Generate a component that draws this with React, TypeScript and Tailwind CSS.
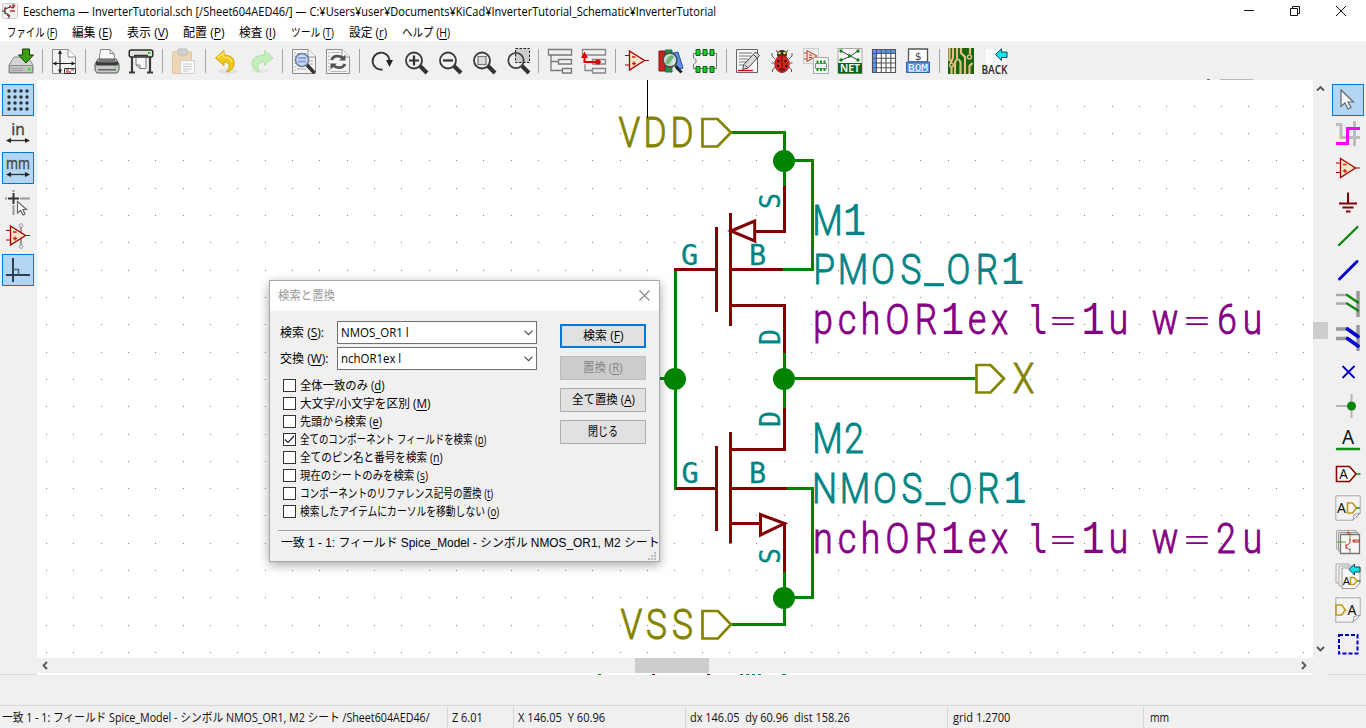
import React, { useLayoutEffect, useRef } from "react";

const UI_FONT = "font-['Open_Sans','Noto_Sans_CJK_JP',sans-serif]";

/** Single line of text condensed or widened to occupy a given width. */
function Fit({ w, children, className = "" }: { w: number; children: React.ReactNode; className?: string }) {
  const outer = useRef<HTMLSpanElement>(null);
  const inner = useRef<HTMLSpanElement>(null);
  useLayoutEffect(() => {
    if (!inner.current || !outer.current) return;
    outer.current.style.width = `${w}px`;
    inner.current.style.transform = `scaleX(${w / inner.current.offsetWidth})`;
  }, [w]);
  return (
    <span ref={outer} className={`inline-block shrink-0 whitespace-pre ${className}`}>
      <span ref={inner} className="inline-block origin-left whitespace-pre">{children}</span>
    </span>
  );
}

/** Text followed by its underlined access key in parentheses. */
function Mn({ t, k, end = "" }: { t: string; k: string; end?: string }) {
  return (
    <>
      {t} (<span className="underline underline-offset-2">{k}</span>){end}
    </>
  );
}

function Ico({ children }: { children: React.ReactNode }) {
  return (
    <svg width="26" height="26" viewBox="0 0 26 26" fill="none" className="block shrink-0 overflow-visible">
      {children}
    </svg>
  );
}

const Page = () => (
  <>
    <path d="M1.5 1.5H17L24.5 9V25.5H1.5Z" fill="#f4f4f4" stroke="#8c8c8c" />
    <path d="M17 1.5V9H24.5" fill="#fff" stroke="#8c8c8c" />
  </>
);

const Lens = () => (
  <>
    <path d="M18 18L25 25" stroke="#333" strokeWidth="4" />
    <circle cx="12" cy="12.5" r="8" stroke="#383838" strokeWidth="1.8" />
  </>
);

const OpAmp = () => (
  <>
    <path d="M1 7.5H6M1 17H6M19 12.5H25" stroke="#a40000" strokeWidth="1.2" />
    <path d="M5.5 3L20.5 12.5L5.5 22Z" fill="#f7e6c8" stroke="#a40000" strokeWidth="1.3" />
    <path d="M8 9H11.5M8 15.5H12M10 13.5V17.5" stroke="#c22" strokeWidth="1.3" />
  </>
);

const HierTree = () => (
  <path d="M1.5 1.5H24.5V7H1.5ZM11.5 11.5H24.5V16H11.5ZM15.5 20.5H24.5V25H15.5ZM4 7V22.5H15M4 13.5H11" fill="none" stroke="#777" strokeWidth="1.3" />
);

const I = {
  save: (
    <Ico>
      <path d="M6 9H20L25 17V25H1V17Z" fill="#d4d4d4" stroke="#888" />
      <path d="M1.5 17.5H24.5V24.5H1.5Z" fill="#c2c2c2" stroke="#8a8a8a" />
      <path d="M3 20.5H15M3 22.5H15" stroke="#999" strokeWidth=".8" />
      <rect x="20" y="20" width="2.5" height="2.5" fill="#1fe01f" />
      <path d="M14.5 1H21.5V7H25.5L18 15L10.5 7H14.5Z" fill="#3aa010" stroke="#163a04" />
    </Ico>
  ),
  page: (
    <Ico>
      <Page />
      <path d="M9 3V25M2 15.5H24" stroke="#222" strokeWidth="1.2" />
      <path d="M9 2L11 6H7ZM9 25.5L11 21.5H7ZM1.5 15.5L5.5 13.5V17.5ZM24.5 15.5L20.5 13.5V17.5Z" fill="#222" />
      <path d="M13.5 20.5H24.5V25.5H13.5Z" fill="#fff" stroke="#333" />
      <path d="M15 22H18M20 22H23M15 24H20" stroke="#a00" />
    </Ico>
  ),
  print: (
    <Ico>
      <path d="M5 13L6.5 1.5H16L20 5.5L21 13Z" fill="#fafafa" stroke="#888" />
      <path d="M16 1.5V5.5H20" stroke="#888" />
      <path d="M4 11H22L25 16V22L23 25H3L1 22V16Z" fill="#c9c9c9" stroke="#555" />
      <rect x="2" y="13.5" width="22" height="4" rx="1" fill="#3a3a3a" />
      <rect x="5" y="11" width="16" height="3.5" fill="#777" />
      <rect x="4" y="21" width="18" height="1.5" fill="#666" />
      <rect x="20" y="18.5" width="2" height="1.5" fill="#6e6" />
    </Ico>
  ),
  plot: (
    <Ico>
      <path d="M4 9V24M22 9V24M1 24.5H7M19 24.5H25" stroke="#3c3c40" strokeWidth="2.2" />
      <path d="M8 8H18V20.5H12L8 17Z" fill="#f6f6f6" stroke="#777" />
      <path d="M8 17H12V20.5" stroke="#777" />
      <rect x="1.2" y="2" width="23.6" height="7" rx="2" fill="#e2e4dc" stroke="#2b2b2b" strokeWidth="1.5" />
      <path d="M6 7.5H20" stroke="#333" strokeWidth="1.5" />
      <rect x="20" y="4" width="2.5" height="2" fill="#2c2" />
    </Ico>
  ),
  paste: (
    <Ico>
      <rect x="1.5" y="3.5" width="19" height="22" rx="1.5" fill="#eed6b4" stroke="#dfc7a6" />
      <rect x="7" y="1" width="9" height="6" rx="1" fill="#d0d0d0" stroke="#bbb" />
      <path d="M9.5 12.5H23.5V25.5H9.5Z" fill="#f8f8f8" stroke="#cfcfcf" />
      <path d="M12 16H21M12 18.5H21M12 21H21M12 23H17" stroke="#cacaca" />
    </Ico>
  ),
  undo: (
    <Ico>
      <ellipse cx="14" cy="23" rx="10" ry="2.5" fill="#e0e0e0" />
      <path d="M1.5 10L10 2.5V7C17.500 7 20.500 11 20 16C19.500 20.500 16.500 23.500 12.500 24C16 20.500 17 14.500 10 13.500V17.500Z" fill="#f2c81c" stroke="#d5a503" strokeLinejoin="round" />
      <path d="M3.5 10L9 5V9C14 9 17 10.500 18 14" stroke="#f9e779" strokeWidth="1.2" />
    </Ico>
  ),
  redo: (
    <Ico>
      <ellipse cx="12" cy="23" rx="9" ry="2" fill="#e8e8e8" />
      <path d="M25 10L16.500 2.500V7C8.500 7 3.500 11 4 16C4.500 20.500 8 23.500 12 24C8.500 20.500 8 14.500 16.500 13.500V17.500Z" fill="#c4efbc" stroke="#ace2a2" strokeLinejoin="round" />
    </Ico>
  ),
  find: (
    <Ico>
      <Page />
      <path d="M4 4V24" stroke="#999" strokeDasharray="1.5 2" />
      <path d="M6 5.500H15M6 21H15M17 13H22M18 16H22" stroke="#aaa" />
      <circle cx="11" cy="12" r="6.500" fill="#c6d8f2" stroke="#70809a" strokeWidth="1.600" />
      <path d="M7 10H15M7 13.500H15" stroke="#86a6da" strokeWidth="1.800" />
      <path d="M16 17L23.500 25" stroke="#333" strokeWidth="3.500" />
    </Ico>
  ),
  replace: (
    <Ico>
      <Page />
      <path d="M4 4V24" stroke="#999" strokeDasharray="1.5 2" />
      <path d="M6 4.500H15M6 23.500H22" stroke="#bbb" />
      <path d="M6.500 12C8 7.500 14 7 18 10M20 16C18 20.500 12 20.500 8 17.500" stroke="#555" strokeWidth="2.800" />
      <path d="M20.500 6.500V12.500H14ZM5.500 21.500V15.500H12Z" fill="#555" />
    </Ico>
  ),
  refresh: (
    <Ico>
      <path d="M14.500 21.500A8.500 8.500 0 1 1 21.500 12" stroke="#333" strokeWidth="1.900" />
      <path d="M18 12H25L21.500 19Z" fill="#222" />
    </Ico>
  ),
  zin: (
    <Ico>
      <Lens />
      <path d="M12 7.500V17.500M7 12.500H17" stroke="#333" strokeWidth="2.200" />
    </Ico>
  ),
  zout: (
    <Ico>
      <Lens />
      <path d="M7 12.500H17" stroke="#333" strokeWidth="2.200" />
    </Ico>
  ),
  zfit: (
    <Ico>
      <Lens />
      <rect x="8" y="8.500" width="8" height="8" fill="#ddd" stroke="#777" strokeWidth="1.200" />
    </Ico>
  ),
  zsel: (
    <Ico>
      <rect x="11.500" y="0.500" width="14" height="14" fill="#ccc" stroke="#222" strokeDasharray="2.500 1.500" />
      <path d="M18 18L25 25" stroke="#333" strokeWidth="4" />
      <circle cx="12" cy="12.500" r="7.700" stroke="#444" strokeWidth="1.800" />
    </Ico>
  ),
  tree: <Ico><HierTree /></Ico>,
  up: (
    <Ico>
      <path d="M1.500 1.500H24.500V7H1.500ZM11.500 11.500H24.500V16H11.500ZM11.500 20.500H24.500V25H11.500ZM4 16V22.500H11" fill="none" stroke="#888" strokeWidth="1.300" />
      <path d="M3.500 8V14H16" stroke="#e00000" strokeWidth="2" />
      <path d="M3.500 3.500L7 10H0ZM15.500 11.500h3l1.500 2.500-1.500 2.500h-3L13.500 14Z" fill="#e00000" />
    </Ico>
  ),
  opamp: <Ico><OpAmp /></Ico>,
  library: (
    <Ico>
      <path d="M1 3H7V23H1Z" fill="#c5271b" stroke="#811" />
      <path d="M7.500 2H14V24H7.500Z" fill="#2e8b3a" stroke="#175" />
      <path d="M15 5L20 4L25 20L19 22Z" fill="#5b93e8" stroke="#2554a0" />
      <circle cx="12" cy="12" r="7" fill="#dcebe4" fillOpacity=".85" stroke="#444" strokeWidth="1.500" />
      <path d="M7 16L10 9L14 7L16 9L11 16Z" fill="#72b67c" />
      <path d="M17.500 18L23.500 24.500" stroke="#222" strokeWidth="3" />
    </Ico>
  ),
  footprint: (
    <Ico>
      <path d="M4 5.500H1.500V10C5 10.500 5 15.500 1.500 16V20.500H24.500V5.500Z" stroke="#777" fill="#f3f3f3" />
      <path d="M4 1.500h4v6H4zM11 1.500h4v6h-4zM18 1.500h4v6h-4zM4 18.500h4v6H4zM11 18.500h4v6h-4zM18 18.500h4v6h-4z" fill="#15cf28" stroke="#175c1b" />
    </Ico>
  ),
  annotate: (
    <Ico>
      <path d="M1.500 1.500H22.500V24.500H1.500Z" fill="#f8f8f8" stroke="#666" />
      <path d="M4 5H17M4 8H16M4 11H13M4 14H12M4 17H9" stroke="#777" />
      <path d="M3 22.500H18" stroke="#e00" strokeWidth="1.400" />
      <path d="M20.500 4L24.500 7.500L13 20L7.500 21.500L9 16.500Z" fill="#ddd" stroke="#444" />
      <path d="M10 17L12.500 19.500M18.500 6.500L22 10" stroke="#444" />
    </Ico>
  ),
  erc: (
    <Ico>
      <path d="M9 5L7 2M17 5L19 2M6 11L3 8V5M20 11L23 8V5M5 15H2.500M21 15H23.500M6 19L3.500 22V24M20 19L22.500 22V24" stroke="#555" strokeWidth="1" />
      <ellipse cx="13" cy="6.500" rx="5" ry="4.500" fill="#33332e" />
      <circle cx="10.500" cy="5" r="1.300" fill="#f6e04a" />
      <circle cx="15.500" cy="5" r="1.300" fill="#f6e04a" />
      <ellipse cx="13" cy="16" rx="7.300" ry="8.500" fill="#d8261f" stroke="#8a1512" strokeWidth=".800" />
      <path d="M13 8V24.500" stroke="#5a0b0b" />
      <g fill="#2a0808"><circle cx="9.500" cy="13" r="1.200" /><circle cx="16.500" cy="13" r="1.200" /><circle cx="9" cy="18" r="1.200" /><circle cx="17" cy="18" r="1.200" /><circle cx="11" cy="21.500" r="1" /><circle cx="15" cy="21.500" r="1" /></g>
    </Ico>
  ),
  assign: (
    <Ico>
      <rect x=".500" y=".500" width="15" height="15" fill="#eee" stroke="#ccc" />
      <path d="M1 5H4M1 11H4M4 2.500L14 8L4 13.500Z" fill="#f3dccb" stroke="#b53b30" />
      <path d="M6 7h3M6 9.500h3" stroke="#b33" />
      <rect x="10.500" y="9.500" width="15" height="16" fill="#f7f7f7" stroke="#aaa" />
      <path d="M12.500 15.500H23.500V20.500H12.500Z" stroke="#888" />
      <path d="M13.500 12.500h2v3h-2zM17 12.500h2v3h-2zM20.500 12.500h2v3h-2zM13.500 20h2v3h-2zM17 20h2v3h-2zM20.500 20h2v3h-2z" fill="#109b20" />
    </Ico>
  ),
  net: (
    <Ico>
      <rect x="1" y=".500" width="24" height="25" fill="#f7f7f7" stroke="#aaa" />
      <path d="M4 3L21 12M21 3L12 9L4 12" stroke="#444" />
      <g fill="#16801f"><circle cx="4" cy="3" r="1.700" /><circle cx="21" cy="3" r="1.700" /><circle cx="12.500" cy="8" r="1.700" /><circle cx="4" cy="12" r="1.700" /><circle cx="21" cy="12" r="1.700" /></g>
      <rect x="1" y="15" width="24" height="10.500" fill="#146314" />
      <text x="13" y="24.200" fontSize="11" fontWeight="600" fill="#fff" textAnchor="middle" textLength="20" lengthAdjust="spacingAndGlyphs" fontFamily="Noto Sans">NET</text>
    </Ico>
  ),
  table: (
    <Ico>
      <rect x="1.500" y="1.500" width="23" height="23" fill="#fff" />
      <path d="M1 1H25V5.500H5.500V25H1Z" fill="#5b99f0" />
      <path d="M1.500 1.500H24.500V24.500H1.500ZM5.500 1.500V24.500M10.300 1.500V24.500M15 1.500V24.500M19.800 1.500V24.500M1.500 5.500H24.500M1.500 10.300H24.500M1.500 15H24.500M1.500 19.800H24.500" stroke="#555" strokeWidth="1.100" />
    </Ico>
  ),
  bom: (
    <Ico>
      <path d="M3.500 1H22.500V14H3.500Z" fill="#fff" stroke="#555" strokeWidth="1.300" />
      <text x="13" y="12" fontSize="11" fill="#444" textAnchor="middle" fontFamily="DejaVu Sans Mono">$</text>
      <path d="M1.500 14H24.500V24.500H1.500Z" fill="#5590e9" stroke="#34659f" />
      <text x="13" y="22.500" fontSize="9.500" fill="#fff" textAnchor="middle" textLength="20" lengthAdjust="spacingAndGlyphs" fontFamily="DejaVu Sans Mono">BOM</text>
      <path d="M4 23.500H22" stroke="#eaf2ff" strokeWidth=".700" />
    </Ico>
  ),
  pcb: (
    <Ico>
      <rect x="0" y="0" width="26" height="26" fill="#16640f" />
      <path d="M1.500 0V13M5 0V10L3 14V16M9 0V11L7 14V26M13 0V5L17 9V26M22 0V6M12.500 26V14L10.500 11M21.500 26V18L24.500 15M3.500 19V26" stroke="#e0bf80" strokeWidth="2.200" />
      <circle cx="3.500" cy="17" r="1.800" stroke="#e0bf80" strokeWidth="1.500" />
      <circle cx="21.500" cy="9" r="2" stroke="#e0bf80" strokeWidth="1.500" />
    </Ico>
  ),
  back: (
    <Ico>
      <path d="M4 1H24V25H4Z" fill="#fbfbfb" />
      <path d="M13.500 6.500L19.500 .800V4H25V9.500H19.500V12.500Z" fill="#12e3ea" stroke="#145" strokeLinejoin="round" />
      <text x="12.500" y="25.500" fontSize="12" fontWeight="600" fill="#333" textAnchor="middle" textLength="26" lengthAdjust="spacingAndGlyphs" fontFamily="Noto Sans">BACK</text>
    </Ico>
  ),
};

const tools: React.ReactNode[] = [
  I.save, null, I.page, null, I.print, I.plot, null, I.paste, null, I.undo, I.redo, null, I.find, I.replace, null,
  I.refresh, I.zin, I.zout, I.zfit, I.zsel, null, I.tree, I.up, null, I.opamp, I.library, I.footprint, null,
  I.annotate, I.erc, I.assign, I.net, I.table, I.bom, null, I.pcb, I.back,
];

const DimArrow = () => (
  <>
    <path d="M4 19.500H22" stroke="#333" strokeWidth="1.300" />
    <path d="M1 19.500L6 17V22ZM25 19.500L20 17V22Z" fill="#222" />
  </>
);

const leftTools: { on?: boolean; icon: React.ReactNode }[] = [
  {
    on: true,
    icon: (
      <Ico>
        {[4, 10, 16, 22].flatMap((y) => [4, 10, 16, 22].map((x) => <circle key={`${x}-${y}`} cx={x} cy={y} r="1.700" fill="#2d3238" />))}
      </Ico>
    ),
  },
  {
    icon: (
      <Ico>
        <text x="13" y="14" fontSize="15.500" fill="#444" stroke="#444" strokeWidth=".300" textAnchor="middle" fontFamily="Noto Sans">in</text>
        <DimArrow />
      </Ico>
    ),
  },
  {
    on: true,
    icon: (
      <Ico>
        <text x="13" y="14" fontSize="16" fill="#444" stroke="#444" strokeWidth=".300" textAnchor="middle" textLength="24" lengthAdjust="spacingAndGlyphs" fontFamily="Noto Sans">mm</text>
        <DimArrow />
      </Ico>
    ),
  },
  {
    icon: (
      <Ico>
        <path d="M8.500 1V3M8.500 16V26M0 9.500H2M15 9.500H25" stroke="#999" strokeWidth="2" />
        <path d="M8.500 4V15M3 9.500H14" stroke="#333" strokeWidth="2" />
        <path d="M12.500 12.500V24L15.500 21.500L18 26L20 25L18 20.500H21.500Z" fill="#fff" stroke="#666" strokeWidth="1.200" />
      </Ico>
    ),
  },
  {
    icon: (
      <Ico>
        <path d="M16 3V24" stroke="#999" strokeWidth="2" />
        <circle cx="16" cy="2.500" r="1.800" fill="#eee" stroke="#999" />
        <circle cx="16" cy="23.500" r="1.800" fill="#eee" stroke="#999" />
        <OpAmp />
      </Ico>
    ),
  },
  {
    on: true,
    icon: (
      <Ico>
        <path d="M8 1V25M1 18H25" stroke="#2c3e50" strokeWidth="2" />
        <path d="M8 12.500H13.500V18" stroke="#50657a" strokeWidth="1.500" />
      </Ico>
    ),
  },
];

const Sheet = () => (
  <>
    <path d="M.800 .800H25.200V18L18 25.200H.800Z" fill="#f3f3f3" stroke="#aaa" />
    <path d="M25.200 18L19 19.500L18 25.200Z" fill="#fff" stroke="#999" />
  </>
);

const A = ({ x, y, s }: { x: number; y: number; s: number }) => (
  <text x={x} y={y} fontSize={s} fill="#111" textAnchor="middle" fontFamily="Noto Sans">A</text>
);

const rightTools: { on?: boolean; icon: React.ReactNode }[] = [
  { on: true, icon: <Ico><path d="M6 3V19.500L10 16L13 22L16 20.500L13 15H18.500Z" fill="#f4f4f4" stroke="#666" strokeWidth="1.200" /></Ico> },
  {
    icon: (
      <Ico>
        <path d="M1 3.500H6V16.500H25M19.500 0V25" stroke="#bcbcbc" strokeWidth="3" />
        <path d="M1 22.500H12.500V7.500H25" stroke="#f0f" strokeWidth="3" />
      </Ico>
    ),
  },
  { icon: <Ico><g transform="translate(0 .5)"><OpAmp /></g></Ico> },
  { icon: <Ico><path d="M13 3.500V14M4 14.500H22M7.500 18.500H18.500M11 22.500H15.500" stroke="#840000" strokeWidth="2" /></Ico> },
  { icon: <Ico><path d="M4 22L22.500 4" stroke="#0a850a" strokeWidth="2.300" strokeLinecap="round" /></Ico> },
  { icon: <Ico><path d="M4.500 22L22 4.500" stroke="#0000c8" strokeWidth="3" strokeLinecap="round" /></Ico> },
  {
    icon: (
      <Ico>
        <path d="M1 4H12M1 12.500H12" stroke="#aaa" strokeWidth="2.300" />
        <path d="M23 0V26" stroke="#999" strokeWidth="3.500" />
        <path d="M12 4L23 11.500M12 12.500L23 19.500" stroke="#0a850a" strokeWidth="2.300" strokeLinecap="round" />
      </Ico>
    ),
  },
  {
    icon: (
      <Ico>
        <path d="M1 4H12M1 13.500H12" stroke="#999" strokeWidth="3.500" />
        <path d="M23 0V26" stroke="#999" strokeWidth="3.500" />
        <path d="M12.500 4L23 11.500M12.500 13.500L23 21" stroke="#0000d0" strokeWidth="3.700" strokeLinecap="round" />
      </Ico>
    ),
  },
  { icon: <Ico><path d="M7.500 7L19.500 19M19.500 7L7.500 19" stroke="#0000c8" strokeWidth="1.800" /></Ico> },
  {
    icon: (
      <Ico>
        <path d="M1 13H13M16.500 1V25" stroke="#b5b5b5" strokeWidth="2" />
        <circle cx="16.500" cy="13" r="4.500" fill="#0a850a" />
      </Ico>
    ),
  },
  { icon: <Ico><A x={13} y={17} s={19} /><path d="M2 22H24" stroke="#0a9010" strokeWidth="2.500" strokeLinecap="round" /></Ico> },
  {
    icon: (
      <Ico>
        <path d="M1.500 5.500H14.500L21 13L14.500 20.500H1.500Z" fill="#fff" stroke="#840000" strokeWidth="1.600" />
        <path d="M21 13H25.500" stroke="#1a9a1a" strokeWidth="1.600" />
        <A x={8.500} y={18} s={13.500} />
      </Ico>
    ),
  },
  {
    icon: (
      <Ico>
        <Sheet />
        <A x={6.500} y={18} s={14} />
        <path d="M12.500 8H17.500L21.500 13L17.500 18H12.500Z" stroke="#c49a15" strokeWidth="1.600" />
        <path d="M21 13H25" stroke="#1a9a1a" strokeWidth="1.500" />
      </Ico>
    ),
  },
  {
    icon: (
      <Ico>
        <path d="M1.500 1.500H21V20H1.500Z" fill="#ececec" stroke="#aaa" />
        <path d="M3.500 3.500H23V22H3.500Z" fill="#eee" stroke="#999" />
        <path d="M5.500 5.500H24.500V24.500H5.500Z" fill="#f7f7f7" stroke="#777" strokeWidth="1.300" />
        <path d="M2 13H11M15 5V12M15 19V24M18 12H21" stroke="#55a545" strokeWidth="1" />
        <path d="M13 2V5H16M11 15V20M11 17L15 14V10M11 18L15 21M18 11H24V13H18Z" stroke="#cc2f25" strokeWidth="1" />
      </Ico>
    ),
  },
  {
    icon: (
      <Ico>
        <path d="M1 1H14V20H1Z" fill="#f1f1f1" stroke="#aaa" />
        <path d="M4 3H17V23H4Z" fill="#f5f5f5" stroke="#aaa" />
        <path d="M7 5H25V20L20 25.500H7Z" fill="#f8f8f8" stroke="#999" />
        <A x={11.500} y={22} s={11.500} />
        <path d="M15.500 14.500H19L22 18L19 21.500H15.500Z" stroke="#c49a15" strokeWidth="1.400" />
        <path d="M22 18H25.500" stroke="#1a9a1a" strokeWidth="1.400" />
        <path d="M14 6.500L19.500 1V4H25V9H19.500V12Z" fill="#12e3ea" stroke="#145" />
      </Ico>
    ),
  },
  {
    icon: (
      <Ico>
        <Sheet />
        <path d="M1 8H6.500L10.500 13L6.500 18H1Z" stroke="#c49a15" strokeWidth="1.600" />
        <A x={17} y={18} s={14} />
      </Ico>
    ),
  },
  { icon: <Ico><rect x="4" y="4" width="18.500" height="18.500" stroke="#0000c0" strokeWidth="2" strokeDasharray="4 2" /></Ico> },
];

function ToolColumn({ items }: { items: { on?: boolean; icon: React.ReactNode }[] }) {
  return (
    <div className="flex flex-col items-center gap-0.5 pt-1">
      {items.map((t, i) => (
        <button
          key={i}
          className={
            t.on
              ? "flex size-8 shrink-0 items-center justify-center border border-[#0078d7] bg-[#b3d6f5]"
              : "flex size-8 shrink-0 items-center justify-center border border-transparent"
          }
        >
          {t.icon}
        </button>
      ))}
    </div>
  );
}

const TEAL = "#008484";
const OLIVE = "#848400";
const PURPLE = "#840084";
const GREEN = "#008400";
const MAROON = "#840000";
const SX = 0.84;

/** Face, size and outline for the characters that need their own drafting shape. */
const glyphs: Record<string, { fontFamily: string; fontSize: number; strokeWidth: number }> = {
  "1": { fontFamily: "Liberation Mono", fontSize: 46, strokeWidth: 0 },
  l: { fontFamily: "DejaVu Sans Mono", fontSize: 39, strokeWidth: 0 },
  "=": { fontFamily: "DejaVu Sans", fontSize: 41, strokeWidth: 0 },
  _: { fontFamily: "Roboto", fontSize: 54, strokeWidth: 0.4 },
};

/** Schematic label whose characters are centred on the given x positions. */
function Label({ t, xs, y, c }: { t: string; xs: number[]; y: number; c: string }) {
  return (
    <text
      transform={`scale(${SX} 1)`}
      fontSize="42"
      fontWeight="300"
      fill={c}
      stroke={c}
      strokeWidth=".9"
      textAnchor="middle"
      fontFamily="Roboto"
      xmlSpace="preserve"
    >
      {[...t].map((ch, i) => (
        <tspan key={i} x={(xs[i] / SX).toFixed(2)} y={ch === "_" ? y - 1 : y} {...glyphs[ch]}>
          {ch}
        </tspan>
      ))}
    </text>
  );
}

function Pin({ t, x, y }: { t: string; x: number; y: number }) {
  return (
    <text x={x} y={y} fontSize="28.500" fill={TEAL} stroke={TEAL} strokeWidth=".3" textAnchor="middle" fontFamily="DejaVu Sans Mono">
      {t}
    </text>
  );
}

function Rot({ t, x, y }: { t: string; x: number; y: number }) {
  return (
    <text transform={`translate(${x} ${y}) rotate(-90) scale(.93 1)`} fontSize="28.500" fill={TEAL} stroke={TEAL} strokeWidth=".3" textAnchor="middle" fontFamily="DejaVu Sans Mono">
      {t}
    </text>
  );
}

function Schematic() {
  const dots: React.ReactNode[] = [];
  for (let j = 0; j < 21; j++)
    for (let i = 0; i < 47; i++)
      dots.push(<rect key={`${i}-${j}`} x={Math.floor(46.4 + i * 27.33)} y={Math.floor(106.3 + j * 27.31)} width="1" height="1" fill="#848484" />);
  return (
    <svg width="1276" height="578" viewBox="37 80 1276 578" className="block" fill="none">
      <g shapeRendering="crispEdges">{dots}</g>
      <g stroke={GREEN} strokeWidth="3">
        <path d="M731 132.500H784.500V186M784 160.500H812.500V269.500H783M675.500 268V490M640 378.500H675M784.500 353V408M784 378.500H976M787 488.500H812.500V597.500H784M784.500 572V624.500H731" />
      </g>
      <g stroke={MAROON} strokeWidth="3">
        <path d="M784.500 186V231.500H755M731 231L754.700 221V241ZM730.500 213V326M716.500 227V312M674 269.500H716M730 269.500H783M730 305.500H784.500V353" />
        <path d="M784.500 408V449.500H730M730.500 432V543.500M716.500 446V531M676 488.500H716M730 488.500H787M730 523.500H760M760.500 514.500V535L784.500 523.500ZM784.500 523V572" />
      </g>
      <g fill={GREEN}>
        <circle cx="784" cy="161" r="11" />
        <circle cx="675" cy="379" r="11" />
        <circle cx="784" cy="379" r="11" />
        <circle cx="784" cy="598" r="11" />
      </g>
      <g stroke={OLIVE} strokeWidth="2.700">
        <path d="M702.500 119H717.500L731 132.500L717.500 146.500H702.500Z" />
        <path d="M976.500 365H990.500L1004 378.500L990.500 392.500H976.500Z" />
        <path d="M702.500 611H718L731 624.500L718 638.500H702.500Z" />
      </g>
      <Label t="VDD" xs={[629.500, 655, 682]} y={147} c={OLIVE} />
      <Label t="VSS" xs={[631.500, 656.500, 682.500]} y={639} c={OLIVE} />
      <Label t="X" xs={[1023.500]} y={393} c={OLIVE} />
      <Label t="M1" xs={[827.500, 854.500]} y={235} c={TEAL} />
      <Label t="PMOS_OR1" xs={[824, 853, 883, 911, 934, 958.500, 987, 1012.500]} y={284} c={TEAL} />
      <Label t="pchOR1ex l=1u w=6u" xs={[823, 847, 870.500, 897.500, 926, 952.500, 977, 999.500, 1018, 1038.500, 1063, 1093, 1118.500, 1140, 1165, 1197, 1227, 1252.500]} y={334} c={PURPLE} />
      <Label t="M2" xs={[827.500, 854]} y={453} c={TEAL} />
      <Label t="NMOS_OR1" xs={[824.500, 855, 885, 912, 935.500, 960.500, 988.500, 1015]} y={503} c={TEAL} />
      <Label t="nchOR1ex l=1u w=2u" xs={[823, 847, 870.500, 897.500, 926, 952.500, 977, 999.500, 1018, 1038.500, 1063, 1093, 1118.500, 1140, 1165, 1197, 1226, 1252.500]} y={553} c={PURPLE} />
      <Pin t="G" x={689.500} y={264.500} />
      <Pin t="B" x={757.500} y={264.500} />
      <Pin t="G" x={690} y={483} />
      <Pin t="B" x={757.500} y={483} />
      <Rot t="S" x={779.500} y={201} />
      <Rot t="D" x={779.500} y={337} />
      <Rot t="D" x={779.500} y={419} />
      <Rot t="S" x={779.500} y={556} />
      <path d="M647.500 80V118" stroke="#000" />
    </svg>
  );
}

const Chevron = ({ d }: { d: string }) => (
  <svg width="9" height="9" viewBox="0 0 9 9" fill="none" className="block shrink-0">
    <path d={d} stroke="#555" strokeWidth="1.800" />
  </svg>
);

function Combo({ text, w }: { text: string; w: number }) {
  return (
    <div className="flex h-[23px] w-[200px] items-center justify-between border border-[#707070] bg-white pr-[3px] pl-[3px]">
      <Fit w={w} className="leading-[18px]">{text}</Fit>
      <svg width="9" height="6" viewBox="0 0 9 6" fill="none">
        <path d="M.500 .700L4.500 4.700L8.500 .700" stroke="#444" strokeWidth="1.100" />
      </svg>
    </div>
  );
}

const checks: [string, string, number, boolean?][] = [
  ["全体一致のみ", "d", 85],
  ["大文字/小文字を区別", "M", 130],
  ["先頭から検索", "e", 82],
  ["全てのコンポーネント フィールドを検索", "p", 186, true],
  ["全てのピン名と番号を検索", "n", 143],
  ["現在のシートのみを検索", "s", 128],
  ["コンポーネントのリファレンス記号の置換", "t", 193],
  ["検索したアイテムにカーソルを移動しない", "o", 199],
];

function Dialog() {
  return (
    <div className="absolute top-[280px] left-[269px] flex h-[282px] w-[391px] flex-col border border-[#a8a8a8] bg-[#f0f0f0] text-black shadow-[0_3px_10px_rgba(0,0,0,0.35)]">
      <div className="flex h-[30px] shrink-0 items-center justify-between bg-white pr-[9px] pl-2 text-[#999]">
        <Fit w={57}>検索と置換</Fit>
        <svg width="11" height="11" viewBox="0 0 11 11" fill="none" className="-mt-0.5">
          <path d="M.500 .500L10.500 10.500M10.500 .500L.500 10.500" stroke="#888" strokeWidth="1.100" />
        </svg>
      </div>
      <div className="flex h-[219px] shrink-0 pl-[10px]">
        <div className="flex w-[280px] flex-col pt-[10px]">
          <div className="mb-[3px] flex h-[23px] items-center">
            <div className="w-[57px]"><Fit w={44}><Mn t="検索" k="S" end=":" /></Fit></div>
            <Combo text="NMOS_OR1 l" w={68} />
          </div>
          <div className="flex h-[23px] items-center">
            <div className="w-[57px]"><Fit w={48}><Mn t="交換" k="W" end=":" /></Fit></div>
            <Combo text="nchOR1ex l" w={60} />
          </div>
          <div className="mt-1.5 flex flex-col pl-[3px]">
            {checks.map(([t, k, w, on]) => (
              <div key={k} className="flex h-[18px] items-center gap-1">
                <span className="flex size-[13px] shrink-0 items-center justify-center border border-[#333] bg-white">
                  {on && (
                    <svg width="11" height="11" viewBox="0 0 11 11" fill="none">
                      <path d="M1 5.500L4 8.500L10 2" stroke="#222" strokeWidth="1.200" />
                    </svg>
                  )}
                </span>
                <Fit w={w} className="mt-0.5 leading-[18px]"><Mn t={t} k={k} /></Fit>
              </div>
            ))}
          </div>
        </div>
        <div className="flex flex-col gap-2 pt-[13px]">
          <button className="flex h-6 w-[86px] items-center justify-center border-2 border-[#0078d7] bg-[#e1e1e1]"><Fit w={40}><Mn t="検索" k="F" /></Fit></button>
          <button className="flex h-6 w-[86px] items-center justify-center border border-[#bfbfbf] bg-[#ccc] text-[#858585]"><Fit w={40}><Mn t="置換" k="R" /></Fit></button>
          <button className="flex h-6 w-[86px] items-center justify-center border border-[#adadad] bg-[#e1e1e1]"><Fit w={63}><Mn t="全て置換" k="A" /></Fit></button>
          <button className="flex h-6 w-[86px] items-center justify-center border border-[#adadad] bg-[#e1e1e1]"><Fit w={30}>閉じる</Fit></button>
        </div>
      </div>
      <div className="mr-2 ml-2 h-0.5 border-t border-b border-t-[#a0a0a0] border-b-white" />
      <div className="flex h-5 items-center overflow-hidden pt-px pl-[11px]">
        <Fit w={379} className="font-['Liberation_Sans','Noto_Sans_CJK_JP',sans-serif]">一致 1 - 1: フィールド Spice_Model - シンボル NMOS_OR1, M2 シート</Fit>
      </div>
      <div className="mt-auto flex justify-end pr-[2px] pb-px">
        <svg width="9" height="8" viewBox="0 0 9 8" fill="#bbb">
          <path d="M6 0h2v2H6zM3 3h2v2H3zM6 3h2v2H6zM0 6h2v2H0zM3 6h2v2H3zM6 6h2v2H6z" />
        </svg>
      </div>
    </div>
  );
}

const menus: [string, string, number][] = [
  ["ファイル", "F", 50], ["編集", "E", 40], ["表示", "V", 41], ["配置", "P", 41],
  ["検査", "I", 37], ["ツール", "T", 43], ["設定", "r", 38], ["ヘルプ", "H", 48],
];

export default function App() {
  return (
    <div className={`relative flex h-[728px] w-[1366px] flex-col overflow-hidden bg-[#f0f0f0] text-[12px] leading-4 text-black ${UI_FONT}`}>
      <header className="flex h-[22px] shrink-0 items-center bg-white pl-[2px]">
        <svg width="16" height="16" viewBox="0 0 16 16" fill="none" className="mr-[5px]">
          <rect x=".500" y=".500" width="15" height="15" rx="1" fill="#f4f4f0" stroke="#ccc" />
          <path d="M3 5V11M3 8H0M3 6L8 4M3 10L7 12V15M11 1V5" stroke="#333" strokeWidth="1.200" />
          <path d="M8 2V4L11 5L13 2M8 8H13M3 4V7M5 12L8 13" stroke="#c1272d" strokeWidth="1.400" />
        </svg>
        <Fit w={693} className="pt-px">Eeschema — InverterTutorial.sch [/Sheet604AED46/] — C:¥Users¥user¥Documents¥KiCad¥InverterTutorial_Schematic¥InverterTutorial</Fit>
        <div className="ml-auto flex items-center gap-9 pr-5">
          <svg width="10" height="10" viewBox="0 0 10 10"><path d="M0 4.500H10" stroke="#111" /></svg>
          <svg width="10" height="10" viewBox="0 0 10 10" fill="none"><path d="M.500 2.500H7.500V9.500H.500ZM2.500 2.500V.500H9.500V7.500H7.500" stroke="#111" /></svg>
          <svg width="10" height="10" viewBox="0 0 10 10"><path d="M0 0L10 10M10 0L0 10" stroke="#111" /></svg>
        </div>
      </header>
      <nav className="flex h-[19px] shrink-0 items-center gap-[15px] bg-white pl-[7px]">
        {menus.map(([t, k, w]) => (
          <Fit key={k} w={w} className="mt-px leading-[19px]"><Mn t={t} k={k} /></Fit>
        ))}
      </nav>
      <div className="flex h-[39px] shrink-0 items-center pl-1">
        {tools.map((t, i) =>
          t ? (
            <div key={i} className="flex w-[34px] shrink-0 items-center justify-center">{t}</div>
          ) : (
            <div key={i} className="flex w-[9px] shrink-0 justify-center"><div className="h-6 w-px bg-[#a5a5a5]" /></div>
          ),
        )}
        <svg width="46" height="1" viewBox="0 0 46 1" className="mr-[113px] ml-auto self-end">
          <path d="M0 .5H3" stroke="#777" />
          <path d="M13 .5H46" stroke="#bbb" />
        </svg>
      </div>
      <main className="flex h-[595px] shrink-0">
        <aside className="w-[37px] shrink-0 border-b border-[#d9d9d9] pr-px"><ToolColumn items={leftTools} /></aside>
        <section className="flex w-[1276px] shrink-0 flex-col bg-white">
          <Schematic />
          <div className="flex h-[15px] items-center bg-[#f0f0f0]">
            <div className="flex w-[598px] pl-1"><Chevron d="M6 1L2.500 4.500L6 8" /></div>
            <div className="h-[15px] w-[74px] bg-[#cdcdcd]" />
            <div className="ml-auto pr-[5px]"><Chevron d="M3 1L6.500 4.500L3 8" /></div>
          </div>
          <svg width="1276" height="2" viewBox="37 0 1276 2">
            <path d="M598 1.500h3" stroke={GREEN} />
            <path d="M652 1.500h3M707 1.500h3" stroke={MAROON} />
            <path d="M740 1.500h3M746 1.500h3M752 1.500h3M758 1.500h3M782 1.500h4" stroke={TEAL} />
          </svg>
        </section>
        <div className="flex w-[15px] shrink-0 flex-col items-center pt-1">
          <Chevron d="M1 6.500L4.500 3L8 6.500" />
          <div className="mt-[229px] h-[17px] w-[15px] bg-[#cdcdcd]" />
          <div className="mt-[305px]"><Chevron d="M1 3L4.500 6.500L8 3" /></div>
        </div>
        <aside className="w-[38px] shrink-0 border-b border-[#d9d9d9] pl-[2px]"><ToolColumn items={rightTools} /></aside>
      </main>
      <div className="h-[30px] shrink-0" />
      <footer className="flex h-[23px] shrink-0 border-t border-[#d7d7d7] pt-px text-[#111]">
        <div className="flex w-[448px] items-center border-r border-[#d7d7d7] pl-[2px]">
          <Fit w={428}>一致 1 - 1: フィールド Spice_Model - シンボル NMOS_OR1, M2 シート /Sheet604AED46/</Fit>
        </div>
        <div className="flex w-[66px] items-center border-r border-[#d7d7d7] pl-1"><Fit w={31}>Z 6.01</Fit></div>
        <div className="flex w-[172px] items-center border-r border-[#d7d7d7] pl-1"><Fit w={87}>{"X 146.05  Y 60.96"}</Fit></div>
        <div className="flex w-[262px] items-center border-r border-[#d7d7d7] pl-1"><Fit w={160}>{"dx 146.05  dy 60.96  dist 158.26"}</Fit></div>
        <div className="flex w-[196px] items-center border-r border-[#d7d7d7] pl-[5px]"><Fit w={57}>grid 1.2700</Fit></div>
        <div className="flex items-center pl-[6px]"><Fit w={19}>mm</Fit></div>
      </footer>
      <Dialog />
    </div>
  );
}
